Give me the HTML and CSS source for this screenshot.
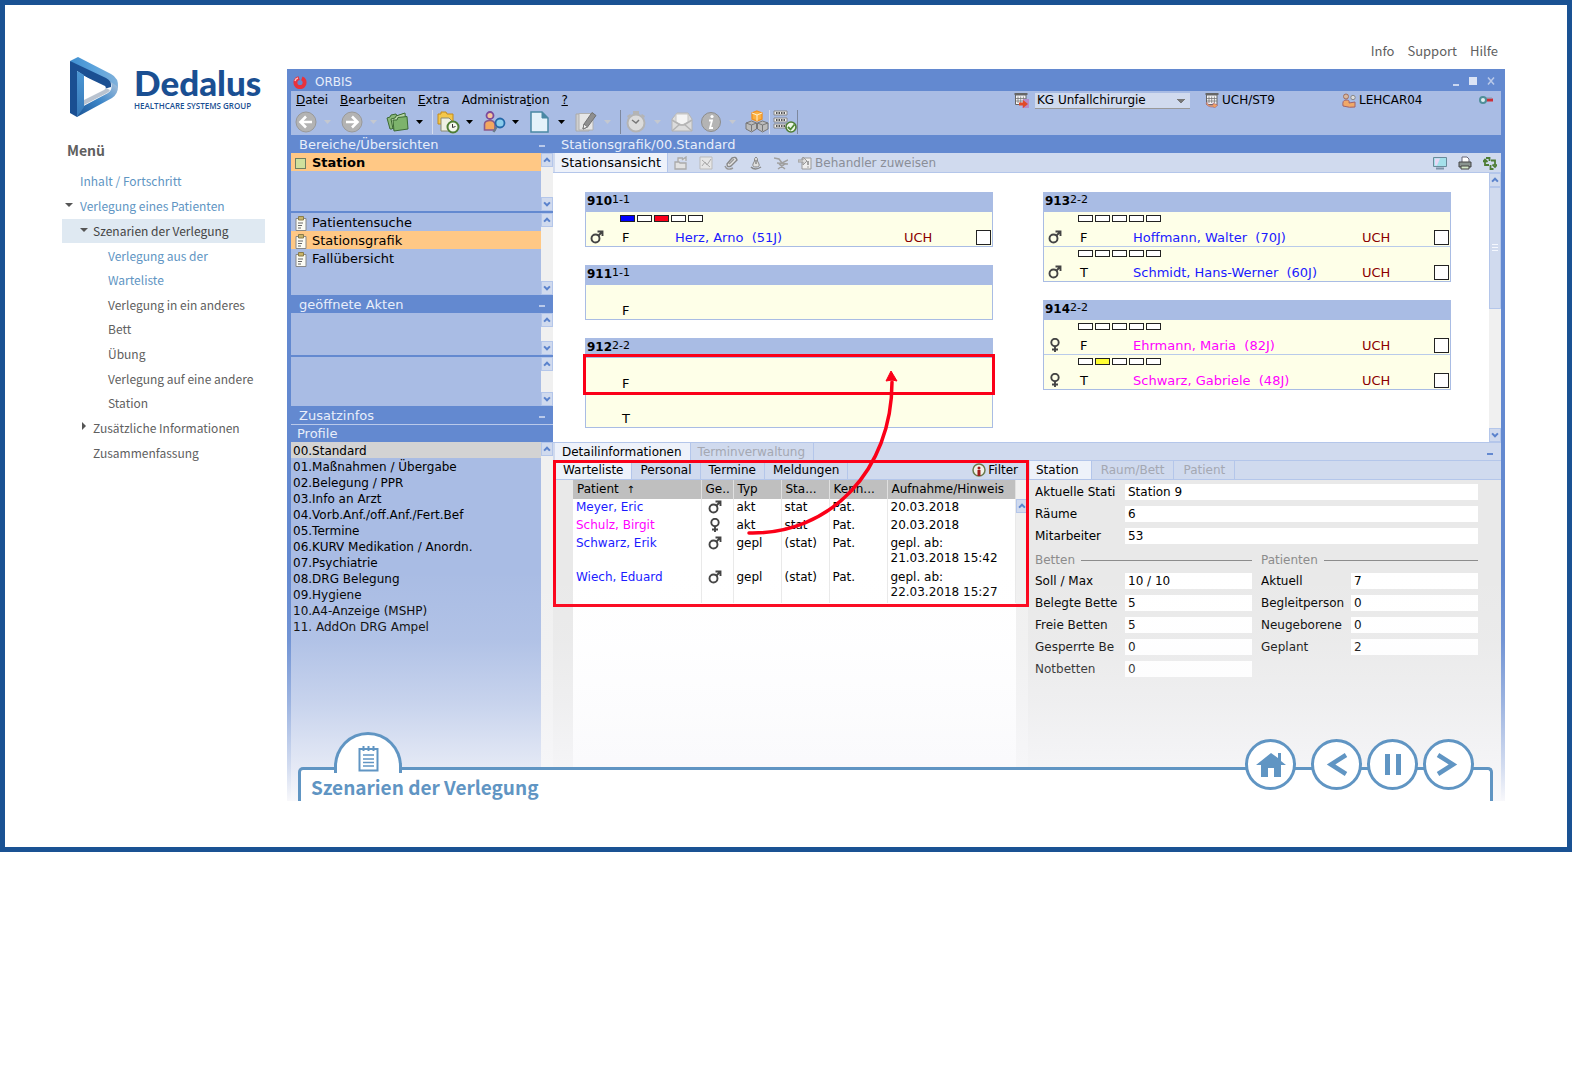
FILE: index.html
```
<!DOCTYPE html>
<html lang="de">
<head>
    <meta charset="UTF-8">
    <meta name="viewport" content="width=device-width, initial-scale=1.0">
    <title>Szenarien der Verlegung</title>
    <link rel="stylesheet" href="styles.css">
</head>
<body>
    <!-- Shared icons -->
    <svg class="sprite" aria-hidden="true">
        <symbol id="up" viewBox="0 0 12 12"><path d="M2.5 8 6 4.5 9.5 8" fill="none" stroke="#5a82cc" stroke-width="2.4"/></symbol>
        <symbol id="down" viewBox="0 0 12 12"><path d="M2.5 4 6 7.5 9.5 4" fill="none" stroke="#5a82cc" stroke-width="2.4"/></symbol>
        <symbol id="caret" viewBox="0 0 12 24"><path d="M3 10h7l-3.5 4z" fill="currentColor"/></symbol>
        <symbol id="male" viewBox="0 0 14 14"><circle cx="5.5" cy="8.5" r="4" fill="none" stroke="#444" stroke-width="1.9"/><path d="M8.5 5.5 12 2M7.5 1.5H12.5V6" fill="none" stroke="#444" stroke-width="1.9"/></symbol>
        <symbol id="female" viewBox="0 0 14 14"><circle cx="7" cy="4.5" r="3.7" fill="none" stroke="#444" stroke-width="1.9"/><path d="M7 8.5V14M4 11.5H10" fill="none" stroke="#444" stroke-width="1.9"/></symbol>
        <symbol id="clip" viewBox="0 0 12 15"><path d="M1 2.5H11V14.5H1z" fill="#fbfbf4" stroke="#888"/><path d="M3.5 0.5h5v3.5h-5z" fill="#c9b46a" stroke="#8a7c4a"/><path d="M3 7h5M3 9.5h4M3 12h3" stroke="#666"/></symbol>
        <symbol id="ward" viewBox="0 0 15 15"><path d="M0.5 1H13.5" stroke="#666" stroke-width="2"/><path d="M1.5 2V11.5H12V2z" fill="#f4f4f6" stroke="#666"/><path d="M4 3.5V10M6.7 3.5V10M9.4 3.5V10M2 5.5H12M2 8H12" stroke="#777" stroke-width=".8"/></symbol>
    </svg>

    <div class="frame">
        <aside class="sidebar">
            <div class="logo">
                <svg width="50" height="60" viewBox="0 0 50 60">
                    <defs>
                        <linearGradient id="lg1" x1="0" y1="0" x2="1" y2="0"><stop offset="0" stop-color="#3f8fd0"/><stop offset=".5" stop-color="#5ba3dc"/><stop offset="1" stop-color="#7fb0da"/></linearGradient>
                        <linearGradient id="lg2" x1="0" y1="1" x2="1" y2="0"><stop offset="0" stop-color="#1a5293"/><stop offset=".5" stop-color="#3c86c8"/><stop offset="1" stop-color="#a9c2dc"/></linearGradient>
                        <linearGradient id="lg3" x1="0" y1="0" x2="0" y2="1"><stop offset="0" stop-color="#4c97d4"/><stop offset="1" stop-color="#3678b8"/></linearGradient>
                    </defs>
                    <path d="M0 4 8 0 41 17Q49 21 48 31L40 25 7 12z" fill="url(#lg1)"/>
                    <path d="M0 4 36 21Q42 24 41 30L34 32 7 14V60L0 56z" fill="#1a4f92"/>
                    <path d="M48 30Q48 37 42 41L7 60 8 52 38 36Q43 33 41 25z" fill="url(#lg2)"/>
                    <path d="M7 14 14 18V50L7 60z" fill="url(#lg3)"/>
                    <path d="M14 42 36 31 40 33Q39 35 37 36L14 48z" fill="#b9c3d0"/>
                    <path d="M14 19 35 29Q37 31 34 33L14 43z" fill="#fff"/>
                </svg>
                <div class="logo-text">
                    <strong>Dedalus</strong>
                    <span>HEALTHCARE SYSTEMS GROUP</span>
                </div>
            </div>
            <h2 class="menu-title">Menü</h2>
            <ul class="menu">
                <li><a href="#" class="visited">Inhalt / Fortschritt</a></li>
                <li class="open"><a href="#" class="visited">Verlegung eines Patienten</a></li>
                <li class="level2 open active"><a href="#">Szenarien der Verlegung</a></li>
                <li class="level3"><a href="#" class="visited">Verlegung aus der<br>Warteliste</a></li>
                <li class="level3"><a href="#">Verlegung in ein anderes<br>Bett</a></li>
                <li class="level3"><a href="#">Übung</a></li>
                <li class="level3"><a href="#">Verlegung auf eine andere<br>Station</a></li>
                <li class="level2 closed"><a href="#">Zusätzliche Informationen</a></li>
                <li class="level2"><a href="#">Zusammenfassung</a></li>
            </ul>
        </aside>

        <main class="content">
            <nav class="top-links">
                <a href="#">Info</a>
                <a href="#">Support</a>
                <a href="#">Hilfe</a>
            </nav>

            <div class="screen">
                <div class="titlebar">
                    <svg width="14" height="14" viewBox="0 0 14 14"><circle cx="7" cy="7.5" r="4.6" fill="none" stroke="#e8323c" stroke-width="4"/><path d="M5 0h5L7.5 7z" fill="#6389d0"/><path d="M2 6Q2.5 3.5 5 3" stroke="#ffb8b8" stroke-width="1.5" fill="none"/></svg>
                    <span>ORBIS</span>
                    <div class="window-controls">
                        <svg width="42" height="12" viewBox="0 0 42 12"><path d="M0 10h6" stroke="#c9d6f0" stroke-width="2"/><path d="M16 2h8v8h-8z" fill="#dbe4f5"/><path d="M35 2.5 41 9.5M41 2.5 35 9.5" stroke="#b9c9ea" stroke-width="1.5"/></svg>
                    </div>
                </div>

                <div class="bars">
                    <div class="menubar">
                        <a href="#"><u>D</u>atei</a>
                        <a href="#"><u>B</u>earbeiten</a>
                        <a href="#"><u>E</u>xtra</a>
                        <a href="#">Administra<u>t</u>ion</a>
                        <a href="#"><u>?</u></a>
                        <div class="session">
                            <svg width="15" height="15"><use href="#ward"/><path d="M9 6h6v9H8z" fill="#b58cc9"/><path d="M5 9.5h4V7l5 4-5 4v-2.5H5z" fill="#e04a28"/></svg>
                            <select aria-label="Klinik"><option>KG Unfallchirurgie</option></select>
                            <span class="status"><svg width="15" height="15"><use href="#ward"/><path d="M2 9Q3 13 8 12V10l5 2-4 3.5V14Q2 14.5 1 10z" fill="#f0a060" stroke="#9a6a8a" stroke-width=".6"/></svg>UCH/ST9</span>
                            <span class="status"><svg width="15" height="15" viewBox="0 0 15 15"><circle cx="4" cy="3.5" r="2.5" fill="#d8b8a0" stroke="#a07060"/><circle cx="11" cy="4.5" r="2.2" fill="#ddd" stroke="#888"/><path d="M1 13Q0 7 4 7 8 7 7 10L13 9v5Q8 15 1 13z" fill="#f0a868" stroke="#a0626a"/></svg>LEHCAR04</span>
                            <svg width="14" height="10" viewBox="0 0 14 10"><path d="M7 5h7" stroke="#cc2f38" stroke-width="3"/><path d="M6 3h7" stroke="#8a9aa8"/><circle cx="4" cy="5" r="3" fill="#dff0f2" stroke="#4f8f9a" stroke-width="2"/></svg>
                        </div>
                    </div>

                    <div class="toolbar">
                        <button aria-label="Zurück"><svg viewBox="0 0 24 24"><circle cx="12" cy="12" r="10" fill="#b3b3b3" stroke="#999"/><path d="M18 12H7M12 6.5 6.5 12 12 17.5" fill="none" stroke="#fff" stroke-width="2.6"/></svg></button>
                        <svg class="caret off"><use href="#caret"/></svg>
                        <button aria-label="Vor"><svg viewBox="0 0 24 24"><circle cx="12" cy="12" r="10" fill="#b3b3b3" stroke="#999"/><path d="M6 12H17M12 6.5 17.5 12 12 17.5" fill="none" stroke="#fff" stroke-width="2.6"/></svg></button>
                        <svg class="caret off"><use href="#caret"/></svg>
                        <button aria-label="Akten"><svg viewBox="0 0 24 24"><path d="M1 8 4 7 5 5 10 4 11 6 17 4 18 8 6 19H4z" fill="#8ab878" stroke="#3c6a34"/><path d="M5 9 9 8 10 6 19 3 20 16 7 19z" fill="#b7d6a6" stroke="#3c6a34"/><path d="M7 10 11 10 12 7.5 21 6.5 22 19 8 21z" fill="#7db36c" stroke="#3c6a34"/></svg></button>
                        <svg class="caret"><use href="#caret"/></svg>
                        <span class="sep light"></span>
                        <button aria-label="Verlauf"><svg viewBox="0 0 24 24"><path d="M2 4h3V2h5l1 2h6v10H2z" fill="#f3c74a" stroke="#c48a1a"/><path d="M5 8h8l4 4v9H5z" fill="#eef0e4" stroke="#8a8a70"/><circle cx="17" cy="17" r="5.5" fill="#f4f8ee" stroke="#4e7d34" stroke-width="2"/><path d="M16.5 14v3.5l3-1" fill="none" stroke="#333"/></svg></button>
                        <svg class="caret"><use href="#caret"/></svg>
                        <button aria-label="Patientensuche"><svg viewBox="0 0 24 24"><circle cx="8" cy="5.5" r="3.5" fill="#f5c49c" stroke="#7c4a9a" stroke-width="1.8"/><path d="M2.5 20V14Q3 10.5 8 10.5 12 10.5 13 14V20z" fill="#f3a860" stroke="#8a5a8a" stroke-width="1.6"/><path d="M14.5 17 11.5 22" stroke="#6a7a8a" stroke-width="2.4"/><circle cx="18" cy="13" r="4.5" fill="#8accec" stroke="#2468a8" stroke-width="1.8"/></svg></button>
                        <svg class="caret"><use href="#caret"/></svg>
                        <button aria-label="Neu"><svg viewBox="0 0 24 24"><path d="M3 2H14L20 8V22H3z" fill="#e4f2fa" stroke="#4a88a4" stroke-width="1.5"/><path d="M14 2V8H20z" fill="#4a88a4" stroke="#4a88a4"/></svg></button>
                        <svg class="caret"><use href="#caret"/></svg>
                        <button aria-label="Bearbeiten"><svg viewBox="0 0 24 24"><path d="M2 4H15V21H2z" fill="#cfcfcf" stroke="#aaa"/><path d="M5 3.5H19V20H5z" fill="#e6e6e6" stroke="#b0b0b0"/><path d="M9 19 10 14 18 2.5 22 5.5 13.5 17z" fill="#8f8f8f" stroke="#707070"/><path d="M9 19 10 14 13.5 17z" fill="#f4f4f4" stroke="#777"/></svg></button>
                        <svg class="caret off"><use href="#caret"/></svg>
                        <span class="sep"></span>
                        <button aria-label="Stoppuhr"><svg viewBox="0 0 24 24"><path d="M9 1h6v3H9zM3 6l3-2 1 1-3 3zM18 4l3 2-1 2-3-3z" fill="#b4b4b4"/><circle cx="12" cy="13" r="8.5" fill="#dcdcdc" stroke="#b4b4b4" stroke-width="2"/><path d="M8 10 12 13 15 10" fill="none" stroke="#777" stroke-width="1.5"/></svg></button>
                        <svg class="caret off"><use href="#caret"/></svg>
                        <button aria-label="Nachrichten"><svg viewBox="0 0 24 24"><path d="M2 9 7 3H18L22 9V21H2z" fill="#dcdcdc" stroke="#b4b4b4"/><path d="M6 4H18V12L12 15 6 12z" fill="#f4f4f4" stroke="#c4c4c4"/><path d="M2 10 10 15H14L22 10M2 21 10 14M22 21 14 14" fill="none" stroke="#b4b4b4" stroke-width="1.5"/></svg></button>
                        <button class="next" aria-label="Info"><svg viewBox="0 0 24 24"><circle cx="12" cy="12" r="9.5" fill="#b4b4b4" stroke="#8c8c8c"/><circle cx="13" cy="6.5" r="1.6" fill="#fff"/><path d="M10 10.5h3L11 18h3" fill="none" stroke="#fff" stroke-width="1.8"/></svg></button>
                        <svg class="caret off"><use href="#caret"/></svg>
                        <button aria-label="Module"><svg viewBox="0 0 24 24"><path d="M12 1 17 3V9L12 11 7 9V3z" fill="#fbb040" stroke="#f0901e" stroke-width="1.3"/><path d="M7 3 12 5 17 3M12 5V11" fill="none" stroke="#fff0d0"/><path d="M6.5 11 11.5 13V19L6.5 22 1 19V13zM17.5 11 23 13V19L17.5 22 12.5 19V13z" fill="#bcbcbc" stroke="#777"/><path d="M1 13 6.5 15 11.5 13M6.5 15V21M12.5 13 17.5 15 23 13M17.5 15V21" fill="none" stroke="#777"/></svg></button>
                        <span class="sep light"></span>
                        <button aria-label="Server"><svg viewBox="0 0 24 24"><path d="M1 1h13v4H1zM1 8h13v4H1zM1 14h13v4H1z" fill="#eee" stroke="#888"/><path d="M3 3h9M3 10h9M3 16h9" stroke="#555" stroke-dasharray="1.5 1" stroke-width="2"/><circle cx="18" cy="17" r="5" fill="#eef6e8" stroke="#4e7d34" stroke-width="1.6"/><path d="M15 17 17.5 19.5 21.5 14.5" fill="none" stroke="#4e8a34" stroke-width="1.8"/></svg></button>
                        <span class="sep"></span>
                    </div>
                </div>

                <div class="columns">
                    <!-- Navigation column -->
                    <div class="nav-col">
                        <div class="head indent">Bereiche/Übersichten <button aria-label="Minimieren"></button></div>
                        <div class="box box-areas">
                            <ul>
                                <li class="selected bold"><i class="area"></i>Station</li>
                            </ul>
                            <div class="scroll"><svg><use href="#up"/></svg><svg><use href="#down"/></svg></div>
                        </div>
                        <div class="box box-views split">
                            <ul>
                                <li><svg width="12" height="15"><use href="#clip"/></svg>Patientensuche</li>
                                <li class="selected"><svg width="12" height="15"><use href="#clip"/></svg>Stationsgrafik</li>
                                <li><svg width="12" height="15"><use href="#clip"/></svg>Fallübersicht</li>
                            </ul>
                            <div class="scroll"><svg><use href="#up"/></svg><svg><use href="#down"/></svg></div>
                        </div>
                        <div class="head indent">geöffnete Akten <button aria-label="Minimieren"></button></div>
                        <div class="box box-files">
                            <ul></ul>
                            <div class="scroll"><svg><use href="#up"/></svg><svg><use href="#down"/></svg></div>
                        </div>
                        <div class="box box-empty split">
                            <ul></ul>
                            <div class="scroll"><svg><use href="#up"/></svg><svg><use href="#down"/></svg></div>
                        </div>
                        <div class="head indent">Zusatzinfos <button aria-label="Minimieren"></button></div>
                        <div class="head sub">Profile</div>
                        <div class="box profiles">
                            <ul>
                                <li class="current">00.Standard</li>
                                <li>01.Maßnahmen / Übergabe</li>
                                <li>02.Belegung / PPR</li>
                                <li>03.Info an Arzt</li>
                                <li>04.Vorb.Anf./off.Anf./Fert.Bef</li>
                                <li>05.Termine</li>
                                <li>06.KURV Medikation / Anordn.</li>
                                <li>07.Psychiatrie</li>
                                <li>08.DRG Belegung</li>
                                <li>09.Hygiene</li>
                                <li>10.A4-Anzeige (MSHP)</li>
                                <li>11. AddOn DRG Ampel</li>
                            </ul>
                            <div class="scroll"><svg><use href="#up"/></svg></div>
                        </div>
                    </div>

                    <!-- Ward view -->
                    <div class="work-col">
                        <div class="head">Stationsgrafik/00.Standard</div>
                        <div class="viewbar">
                            <button class="tab on">Stationsansicht</button>
                            <div class="view-tools">
                                <svg viewBox="0 0 14 14"><path d="M1 6h4l1 1h6v6H1zM4 6V2h5M8 4 12 1v4" fill="#e2e2e2" stroke="#aaa" stroke-width="1.3"/></svg>
                                <svg viewBox="0 0 14 14"><path d="M1 1h12v12H1z" fill="#e6e6e6" stroke="#bbb"/><path d="M3 10 6 6 8 9 12 3M3 4l8 7" fill="none" stroke="#aaa"/></svg>
                                <svg viewBox="0 0 14 14"><path d="M3 8 8 2Q12 0 13 4L7 10Q3 12 3 8z" fill="#e4e4e4" stroke="#888" stroke-width="1.4"/><path d="M5 8 10 3M1 10Q3 15 9 12" fill="none" stroke="#999" stroke-width="1.5"/></svg>
                                <svg viewBox="0 0 14 14"><path d="M7 1Q9 2 8.5 5L10 8Q11 11 7 11 3 11 4 8L5.5 5Q5 2 7 1z" fill="#e0e0e0" stroke="#888"/><path d="M7 4v4M2 11Q6 15 12 11" fill="none" stroke="#888" stroke-width="1.5"/></svg>
                                <svg viewBox="0 0 14 14"><path d="M0 2 5 3 8 7 14 4M3 7 14 8M4 13 11 8M5 8 11 13" fill="none" stroke="#a0a0a0" stroke-width="1.5"/></svg>
                            </div>
                            <button class="assign" disabled><svg width="14" height="14" viewBox="0 0 14 14"><path d="M4 2h9v11H4z" fill="#eee" stroke="#999"/><path d="M0 4h5V1l4 4-4 4V6H0z" fill="#ddd" stroke="#999"/><path d="M10 5v4M10 10.5v1" stroke="#888" stroke-width="1.5"/></svg>Behandler zuweisen</button>
                            <div class="view-actions">
                                <svg viewBox="0 0 14 14"><path d="M.5 1.5h13v9H.5z" fill="#a4e0ea" stroke="#6a8a9a"/><path d="M2 2.5h5l-3 7H2z" fill="#e8d8f4"/><path d="M3 12.5h8" stroke="#7c93a8" stroke-width="2"/></svg>
                                <svg viewBox="0 0 14 14"><path d="M4 6V1h5l2 2v3" fill="#fff" stroke="#667"/><path d="M1 6h12v5H1z" fill="#8a9490" stroke="#444"/><path d="M3 10h8v3H3z" fill="#d4e8c8" stroke="#444"/></svg>
                                <svg viewBox="0 0 14 14"><path d="M6 9H2V5M0 6 2 3.5 4.5 6M3 2H6.5V5M8 4.5H12V9M9.5 8.5 12 11 14 8.5M10.5 13H7.5V9" fill="none" stroke="#4e7d34" stroke-width="1.8"/></svg>
                            </div>
                        </div>

                        <div class="ward">
                            <div class="rooms">
                                <div class="room-col">
                                    <section class="room">
                                        <h3>910<sup>1-1</sup></h3>
                                        <div class="bed">
                                            <div class="flags"><i class="blue"></i><i></i><i class="red"></i><i></i><i></i></div>
                                            <svg class="sex"><use href="#male"/></svg><span>F</span><span class="male">Herz, Arno &nbsp;(51J)</span><span class="dept">UCH</span><input type="checkbox" aria-label="Herz, Arno">
                                        </div>
                                    </section>
                                    <section class="room">
                                        <h3>911<sup>1-1</sup></h3>
                                        <div class="bed"><span class="free">F</span></div>
                                    </section>
                                    <section class="room">
                                        <h3>912<sup>2-2</sup></h3>
                                        <div class="bed target"><span class="free">F</span></div>
                                        <div class="bed"><span class="free">T</span></div>
                                    </section>
                                </div>
                                <div class="room-col">
                                    <section class="room">
                                        <h3>913<sup>2-2</sup></h3>
                                        <div class="bed">
                                            <div class="flags"><i></i><i></i><i></i><i></i><i></i></div>
                                            <svg class="sex"><use href="#male"/></svg><span>F</span><span class="male">Hoffmann, Walter &nbsp;(70J)</span><span class="dept">UCH</span><input type="checkbox" aria-label="Hoffmann, Walter">
                                        </div>
                                        <div class="bed">
                                            <div class="flags"><i></i><i></i><i></i><i></i><i></i></div>
                                            <svg class="sex"><use href="#male"/></svg><span>T</span><span class="male">Schmidt, Hans-Werner &nbsp;(60J)</span><span class="dept">UCH</span><input type="checkbox" aria-label="Schmidt, Hans-Werner">
                                        </div>
                                    </section>
                                    <section class="room">
                                        <h3>914<sup>2-2</sup></h3>
                                        <div class="bed">
                                            <div class="flags"><i></i><i></i><i></i><i></i><i></i></div>
                                            <svg class="sex"><use href="#female"/></svg><span>F</span><span class="female">Ehrmann, Maria &nbsp;(82J)</span><span class="dept">UCH</span><input type="checkbox" aria-label="Ehrmann, Maria">
                                        </div>
                                        <div class="bed">
                                            <div class="flags"><i></i><i class="yellow"></i><i></i><i></i><i></i></div>
                                            <svg class="sex"><use href="#female"/></svg><span>T</span><span class="female">Schwarz, Gabriele &nbsp;(48J)</span><span class="dept">UCH</span><input type="checkbox" aria-label="Schwarz, Gabriele">
                                        </div>
                                    </section>
                                </div>
                            </div>
                            <div class="scroll"><svg><use href="#up"/></svg><div class="thumb"></div><svg><use href="#down"/></svg></div>
                        </div>

                        <div class="tabs outer">
                            <button class="tab on">Detailinformationen</button>
                            <button class="tab" disabled>Terminverwaltung</button>
                            <button class="mini" aria-label="Minimieren"></button>
                        </div>

                        <div class="details">
                            <div class="waiting">
                                <div class="tabs">
                                    <button class="tab on">Warteliste</button>
                                    <button class="tab">Personal</button>
                                    <button class="tab">Termine</button>
                                    <button class="tab">Meldungen</button>
                                    <button class="filter"><svg width="14" height="14" viewBox="0 0 14 14"><circle cx="7" cy="7" r="6" fill="#f2f2e8" stroke="#6b7a4c" stroke-width="1.5"/><circle cx="7" cy="5" r="1.5" fill="#a01c1c"/><path d="M5.5 7h3v6h-3z" fill="#a01c1c"/></svg>Filter</button>
                                </div>
                                <div class="list-area">
                                    <table>
                                        <thead>
                                            <tr><th class="w-patient">Patient &nbsp;<small>↑</small></th><th class="w-sex">Ge..</th><th class="w-type">Typ</th><th class="w-type">Sta...</th><th class="w-kenn">Kenn...</th><th>Aufnahme/Hinweis</th></tr>
                                        </thead>
                                        <tbody>
                                            <tr><td class="male">Meyer, Eric</td><td><svg class="sex"><use href="#male"/></svg></td><td>akt</td><td>stat</td><td>Pat.</td><td>20.03.2018</td></tr>
                                            <tr><td class="female">Schulz, Birgit</td><td><svg class="sex"><use href="#female"/></svg></td><td>akt</td><td>stat</td><td>Pat.</td><td>20.03.2018</td></tr>
                                            <tr><td class="male">Schwarz, Erik</td><td><svg class="sex"><use href="#male"/></svg></td><td>gepl</td><td>(stat)</td><td>Pat.</td><td>gepl. ab:<br>21.03.2018 15:42</td></tr>
                                            <tr><td class="male">Wiech, Eduard</td><td><svg class="sex"><use href="#male"/></svg></td><td>gepl</td><td>(stat)</td><td>Pat.</td><td>gepl. ab:<br>22.03.2018 15:27</td></tr>
                                        </tbody>
                                    </table>
                                    <div class="scroll"><svg><use href="#up"/></svg></div>
                                </div>
                            </div>

                            <div class="station">
                                <div class="tabs">
                                    <button class="tab on">Station</button>
                                    <button class="tab" disabled>Raum/Bett</button>
                                    <button class="tab" disabled>Patient</button>
                                </div>
                                <form class="info">
                                    <div class="fields">
                                        <label for="station">Aktuelle Stati</label><input id="station" value="Station 9" readonly>
                                        <label for="raeume">Räume</label><input id="raeume" value="6" readonly>
                                        <label for="mitarbeiter">Mitarbeiter</label><input id="mitarbeiter" value="53" readonly>
                                    </div>
                                    <div class="groups">
                                        <div>
                                            <h4>Betten</h4>
                                            <div class="fields">
                                                <label for="soll">Soll / Max</label><input id="soll" value="10 / 10" readonly>
                                                <label for="belegt">Belegte Bette</label><input id="belegt" value="5" readonly>
                                                <label for="frei">Freie Betten</label><input id="frei" value="5" readonly>
                                                <label for="gesperrt">Gesperrte Be</label><input id="gesperrt" value="0" readonly>
                                                <label for="not">Notbetten</label><input id="not" value="0" readonly>
                                            </div>
                                        </div>
                                        <div>
                                            <h4>Patienten</h4>
                                            <div class="fields">
                                                <label for="aktuell">Aktuell</label><input id="aktuell" value="7" readonly>
                                                <label for="begleit">Begleitperson</label><input id="begleit" value="0" readonly>
                                                <label for="neu">Neugeborene</label><input id="neu" value="0" readonly>
                                                <label for="geplant">Geplant</label><input id="geplant" value="2" readonly>
                                            </div>
                                        </div>
                                    </div>
                                </form>
                            </div>
                        </div>

                        <!-- Arrow from the waiting list to the free bed -->
                        <svg class="arrow" width="160" height="180" viewBox="0 0 160 180">
                            <path d="M8 167C89 169 151 104 151 16" fill="none" stroke="#fb0018" stroke-width="3.5" stroke-linecap="round"/>
                            <path d="M150 5 156 15 151 14 145 15z" fill="#fb0018" stroke="#fb0018"/>
                        </svg>
                    </div>
                </div>

                <!-- Player bar -->
                <div class="player">
                    <div class="notes">
                        <svg width="21" height="27" viewBox="0 0 21 27"><path d="M1.5 4H19.5V25.5H1.5z" fill="none" stroke="#6095c3" stroke-width="2"/><path d="M5.5 1V6M10.5 1V6M15.5 1V6" stroke="#6095c3" stroke-width="2"/><path d="M5 10H16M5 14H16M5 17.5H16M5 21H16" stroke="#6095c3" stroke-width="1.4"/></svg>
                    </div>
                    <h1>Szenarien der Verlegung</h1>
                    <div class="controls">
                        <button class="home" aria-label="Startseite"><svg viewBox="0 0 32 26"><path d="M1 13 16 1 23 6V1H26V9L31 13H26V25H19V16H13V25H6V13z" fill="#6095c3"/></svg></button>
                        <button aria-label="Zurück"><svg viewBox="0 0 32 26"><path d="M25 3 10 12.5 25 22" fill="none" stroke="#6095c3" stroke-width="4.5"/></svg></button>
                        <button aria-label="Pause"><svg viewBox="0 0 32 26"><path d="M8 2h5v21H8zM19 2h5v21h-5z" fill="#6095c3"/></svg></button>
                        <button aria-label="Weiter"><svg viewBox="0 0 32 26"><path d="M5 3 20 12.5 5 22" fill="none" stroke="#6095c3" stroke-width="4.5"/></svg></button>
                    </div>
                </div>
            </div>
        </main>
    </div>
</body>
</html>
```
FILE: styles.css
```
* {
    box-sizing: border-box;
}

body {
    margin: 0;
    background-color: #fff;
    font-family: "Noto Sans CJK SC", "Open Sans", sans-serif;
    color: #606060;
}

a {
    color: inherit;
    text-decoration: none;
}

ul {
    list-style: none;
    margin: 0;
    padding: 0;
}

button {
    border: 0;
    padding: 0;
    background: none;
    font: inherit;
    color: inherit;
}

.sprite {
    position: absolute;
    width: 0;
    height: 0;
}

.frame {
    display: flex;
    gap: 22px;
    border: 5px solid #1a5293;
    padding: 36px 62px 46px 57px;
}

/* Sidebar */
.sidebar {
    flex: 0 0 203px;
    min-width: 0;
    padding-top: 16px;
    font-size: 12px;
}

.logo {
    display: flex;
    gap: 14px;
    padding-left: 8px;
}

.logo-text {
    display: flex;
    flex-direction: column;
    padding-top: 4px;
    color: #1a4f92;
    font-family: Lato, sans-serif;
    white-space: nowrap;
}

.logo-text strong {
    font-size: 35px;
    font-weight: 900;
    line-height: 42px;
}

.logo-text span {
    font-family: "Open Sans", sans-serif;
    font-size: 8px;
    font-weight: 600;
    line-height: 10px;
    margin-top: -2px;
}

.menu-title {
    margin: 21px 0 7px 5px;
    font-size: 14px;
    line-height: 24px;
}

.menu li {
    position: relative;
    margin-bottom: 1px;
    padding-left: 18px;
    line-height: 24px;
}

.menu .level2 {
    padding-left: 31px;
}

.menu .level3 {
    padding-left: 46px;
}

.menu .active {
    background-color: #dfe9f2;
    color: #444;
}

.menu .visited {
    color: #6095c3;
}

.menu .open::before,
.menu .closed::before {
    content: "";
    position: absolute;
    top: 9px;
    left: 3px;
    border: 4px solid transparent;
    border-top-color: #555;
    border-bottom-width: 0;
}

.menu .level2::before {
    left: 18px;
}

.menu .closed::before {
    top: 6px;
    left: 20px;
    border: 4px solid transparent;
    border-left-color: #555;
    border-right-width: 0;
}

/* Main area */
.content {
    flex: 1;
    min-width: 0;
}

.top-links {
    display: flex;
    justify-content: flex-end;
    gap: 13px;
    height: 28px;
    padding-right: 7px;
    font-size: 13px;
    line-height: 20px;
}

.screen {
    position: relative;
    background-color: #6389d0;
    padding: 0 4px;
    font: 12px/18px "DejaVu Sans", sans-serif;
    color: #000;
}

/* Fade out towards the player bar */
.screen::after {
    content: "";
    position: absolute;
    left: 0;
    right: 0;
    bottom: 0;
    height: 230px;
    background: linear-gradient(rgba(248, 248, 251, 0), rgba(248, 248, 251, 0.1) 30%, rgba(248, 248, 251, 0.38) 57%, rgba(248, 248, 251, 0.75) 85%, #f8f8fb);
    pointer-events: none;
}

.titlebar {
    display: flex;
    align-items: center;
    gap: 8px;
    height: 22px;
    padding: 4px 6px 0 2px;
    color: #e8eefa;
}

.window-controls {
    margin-left: auto;
    line-height: 12px;
}

.bars {
    background-color: #a9bce4;
    height: 44px;
}

.menubar {
    display: flex;
    gap: 12px;
    height: 18px;
    padding: 0 8px 0 5px;
}

.session {
    display: flex;
    align-items: center;
    margin-left: auto;
}

.session select {
    width: 155px;
    height: 16px;
    margin: 2px 15px 0 6px;
    padding: 0 0 0 2px;
    border: 0;
    border-bottom: 1px solid #999;
    border-radius: 0;
    appearance: none;
    background:
        linear-gradient(to bottom left, #777 50%, transparent 50%) right 9px top 6px / 4px 5px no-repeat,
        linear-gradient(to bottom right, #777 50%, transparent 50%) right 5px top 6px / 4px 5px no-repeat,
        #d0daee;
    font: inherit;
    line-height: 15px;
}

.status {
    display: flex;
    align-items: center;
    gap: 2px;
    width: 137px;
}

.toolbar {
    display: flex;
    height: 26px;
    padding: 1px 0 0 3px;
}

.toolbar button,
.toolbar button svg {
    width: 24px;
    height: 24px;
}

.toolbar .next {
    margin-left: 5px;
}

.caret {
    width: 12px;
    height: 24px;
    margin: 0 7px 0 3px;
}

.caret.off {
    color: #c4c8d0;
}

.sep {
    width: 1px;
    height: 24px;
    margin-right: 3px;
    background-color: #7d889e;
}

.sep.light {
    background-color: #d5ddee;
}

.columns {
    display: flex;
}

.nav-col {
    display: flex;
    flex-direction: column;
    flex: 0 0 262px;
}

.head {
    height: 18px;
    padding: 0 8px;
    background-color: #6389d0;
    color: #e8eefa;
    font-size: 13px;
    line-height: 20px;
}

.head.indent {
    display: flex;
    justify-content: space-between;
}

.head button,
.mini {
    width: 6px;
    height: 2px;
    margin-top: 10px;
    background-color: #b9c9ea;
}

.head.sub {
    padding-left: 6px;
    border-top: 1px solid #b9c9ea;
    line-height: 18px;
}

.box {
    display: flex;
    background-color: #a9bce4;
}

.box ul {
    flex: 1;
}

.box li {
    display: flex;
    align-items: center;
    gap: 5px;
    height: 18px;
    padding: 2px 0 0 4px;
    font-size: 13px;
}

.box .selected {
    background-color: #ffc885;
}

.box .bold {
    font-weight: bold;
}

.area {
    width: 11px;
    height: 11px;
    margin-right: 1px;
    border: 1px solid #6f7f62;
    background-color: #cfe09c;
}

.split {
    border-top: 2px solid #6389d0;
}

.box-areas {
    height: 58px;
}

.box-views {
    height: 84px;
}

.box-files {
    height: 42px;
}

.box-empty {
    height: 51px;
}

.profiles {
    flex: 1;
}

.box.profiles li {
    height: 16px;
    padding: 2px 2px 0;
    font-size: 12px;
}

.profiles .current {
    background-color: #d3d3d3;
}

.scroll {
    display: flex;
    flex-direction: column;
    justify-content: space-between;
    flex: 0 0 12px;
    background-color: #f0f0f0;
}

.scroll svg {
    flex: 0 0 14px;
    width: 12px;
    background-color: #d0daee;
    border: 1px solid #b4c6ea;
}

.scroll .thumb {
    height: 122px;
    margin-bottom: auto;
    border: 1px solid #b4c6ea;
    background: repeating-linear-gradient(#f4f7fd 0 1px, #d0daee 1px 3px) center / 6px 9px no-repeat, #d0daee;
}

/* Ward view */
.work-col {
    position: relative;
    display: flex;
    flex-direction: column;
    flex: 1;
    min-width: 0;
}

.viewbar {
    display: flex;
    align-items: center;
    height: 20px;
    padding-left: 2px;
    background-color: #d0daee;
    border-bottom: 1px solid #b4c6ea;
}

.tab {
    height: 100%;
    padding: 0 7px;
    border-right: 1px solid #b4c6ea;
    white-space: nowrap;
}

.tab.on {
    background-color: #eef2fa;
}

.viewbar .tab {
    padding: 0 6px;
    font-size: 13px;
}

.tab:disabled {
    color: #a4a8b2;
}

.view-tools,
.view-actions {
    display: flex;
    gap: 11px;
    padding: 0 10px 0 6px;
}

.view-tools svg,
.view-actions svg {
    width: 14px;
    height: 14px;
}

.view-actions {
    margin-left: auto;
    padding: 0 4px;
}

.assign {
    display: flex;
    align-items: center;
    gap: 3px;
    color: #8a8e98;
}

.ward {
    display: flex;
    background-color: #fff;
}

.rooms {
    flex: 1;
    display: grid;
    grid-template-columns: 1fr 1fr;
    gap: 50px;
    padding: 19px 38px 14px 32px;
}

.room {
    margin-bottom: 18px;
    border: 1px solid #a9bce4;
    border-top: 0;
    background-color: #feffe8;
}

.room-col .room:last-child {
    margin-bottom: 0;
}

.room h3 {
    height: 20px;
    margin: 0;
    padding-left: 1px;
    background-color: #a9bce4;
    font-size: 12px;
    line-height: 18px;
}

.room sup {
    font-size: 11px;
    font-weight: normal;
    line-height: 1px;
    vertical-align: 2px;
}

.bed {
    position: relative;
    display: grid;
    grid-template-columns: 36px 53px 1fr 72px 16px;
    grid-template-rows: 16px 18px;
    align-items: center;
    height: 34px;
    font-size: 13px;
}

.bed + .bed {
    height: 35px;
    border-top: 1px solid #b9cbea;
}

.bed span {
    padding-top: 2px;
}

.bed .free {
    grid-area: 2 / 2;
}

.target::after {
    content: "";
    position: absolute;
    z-index: 1;
    inset: -4px -3px -3px -3px;
    border: 3px solid #fb0018;
}

.flags {
    grid-column: 2 / -1;
    display: flex;
    gap: 2px;
    margin: 0 0 4px -2px;
}

.flags i {
    width: 15px;
    height: 7px;
    border: 1px solid #222;
    background-color: #fff;
}

.flags .blue {
    background-color: #0000ff;
}

.flags .red {
    background-color: #fb0018;
}

.flags .yellow {
    background-color: #ffff33;
}

.bed .sex {
    margin-left: 4px;
}

.sex {
    width: 14px;
    height: 14px;
    vertical-align: top;
}

.bed input {
    appearance: none;
    width: 15px;
    height: 15px;
    margin: 0;
    border: 1px solid #222;
    background-color: #fff;
}

.male {
    color: #1a1aff;
}

.female {
    color: #ff00ff;
}

.dept {
    color: #8b0000;
}

/* Detail area */
.tabs {
    display: flex;
    height: 19px;
    padding-left: 2px;
    background-color: #d0daee;
    border-bottom: 1px solid #b4c6ea;
    line-height: 18px;
}

.tabs.outer {
    border-top: 1px solid #b4c6ea;
}

.outer .tab {
    padding: 0 8px 0 7px;
}

.mini {
    margin: 10px 8px 0 auto;
    background-color: #6389d0;
}

.details {
    display: flex;
    flex: 1;
    min-height: 340px;
}

.waiting {
    position: relative;
    display: flex;
    flex-direction: column;
    flex: 0 0 475px;
    background-color: #fff;
}

.waiting::after {
    content: "";
    position: absolute;
    inset: -1px -1px auto 0;
    height: 141px;
    border: 3px solid #fb0018;
}

.waiting .tab {
    padding: 0 8px;
}

.filter {
    display: flex;
    align-items: center;
    gap: 2px;
    margin-left: auto;
    padding-right: 10px;
}

.list-area {
    display: flex;
    flex: 1;
    align-items: flex-start;
    padding-left: 20px;
    background: linear-gradient(#e9e9e9, #e9e9e9) left / 20px 100% no-repeat;
}

.list-area table {
    flex: 1;
    border-collapse: collapse;
    table-layout: fixed;
    width: 443px;
    line-height: 15px;
}

.list-area .scroll {
    align-self: stretch;
    padding-top: 19px;
}

.list-area th {
    height: 19px;
    padding: 0 4px;
    border-right: 1px solid #e0e0e0;
    background-color: #bfbfbf;
    font-weight: normal;
    text-align: left;
    white-space: nowrap;
}

.list-area small {
    font-size: 10px;
}

.list-area td {
    height: 18px;
    padding: 1px 2px 2px 3px;
    border-right: 1px solid #e9e9e9;
    vertical-align: top;
    white-space: nowrap;
}

.list-area tr:nth-child(n + 3) td {
    height: 34px;
}

.list-area td .sex {
    margin-left: 3px;
}

.w-patient {
    width: 128px;
}

.w-sex {
    width: 32px;
}

.w-type {
    width: 48px;
}

.w-kenn {
    width: 58px;
}

.station {
    flex: 1;
    background-color: #e9e9e9;
}

.station .tab {
    padding: 0 9px;
}

.station .tab.on {
    padding: 0 12px 0 6px;
}

.info {
    padding: 4px 23px 0 7px;
}

.fields {
    display: grid;
    grid-template-columns: 90px 1fr;
    row-gap: 6px;
    line-height: 16px;
}

.fields label {
    overflow: hidden;
    white-space: nowrap;
}

.fields input {
    min-width: 0;
    height: 16px;
    padding: 0 3px;
    border: 0;
    background-color: #fff;
    font: inherit;
}

.groups {
    display: grid;
    grid-template-columns: 1fr 1fr;
    gap: 9px;
    margin-top: 7px;
}

.groups h4 {
    display: flex;
    align-items: center;
    gap: 6px;
    margin: 0 0 4px;
    color: #8c8c8c;
    font-weight: normal;
    font-size: 12px;
    line-height: 18px;
}

.groups h4::after {
    content: "";
    flex: 1;
    height: 1px;
    background-color: #8c8c8c;
}

.arrow {
    position: absolute;
    z-index: 2;
    top: 231px;
    left: 188px;
}

/* Player bar lies over the lower edge of the screen */
.player {
    position: absolute;
    z-index: 3;
    left: 11px;
    right: 12px;
    bottom: 0;
    display: flex;
    justify-content: space-between;
    height: 34px;
    padding-left: 10px;
    border: 3px solid #6095c3;
    border-bottom: 0;
    border-radius: 5px 5px 0 0;
    background-color: #fff;
}

.player h1 {
    margin: 3px 0 0;
    color: #6095c3;
    font: bold 19px/28px "Noto Sans CJK SC", "Open Sans", sans-serif;
}

.notes {
    position: absolute;
    left: 33px;
    bottom: 28px;
    display: flex;
    align-items: center;
    justify-content: center;
    width: 68px;
    height: 41px;
    padding-top: 8px;
    border: 3px solid #6095c3;
    border-bottom: 0;
    border-radius: 34px 34px 0 0;
    background-color: #fff;
}

.controls {
    display: flex;
    gap: 5px;
    margin: -31px 16px 0 0;
}

.controls button {
    width: 51px;
    height: 51px;
    border: 3px solid #6095c3;
    border-radius: 50%;
    background-color: #fff;
}

.controls .home {
    margin-right: 10px;
}

.controls svg {
    width: 32px;
    height: 26px;
    vertical-align: middle;
}
```
